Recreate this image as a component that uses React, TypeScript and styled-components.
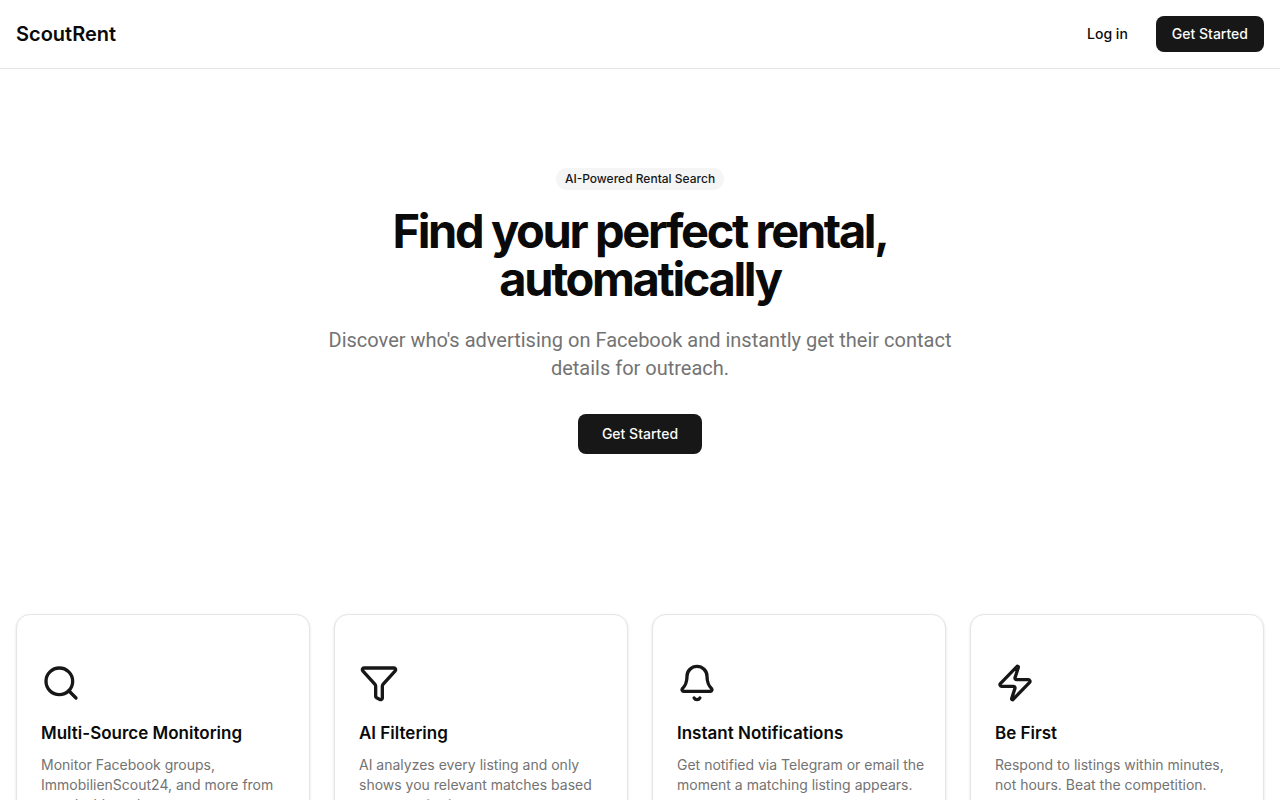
import React from "react";
import styled, { createGlobalStyle } from "styled-components";
import { Search, Funnel, Bell, Zap, type LucideIcon } from "lucide-react";

const GlobalStyle = createGlobalStyle`
  *, *::before, *::after { box-sizing: border-box; }
  body {
    margin: 0;
    background: #ffffff;
    color: #0a0a0a;
    font-family: Inter, "Liberation Sans", sans-serif;
    font-size: 16px;
    line-height: 24px;
    -webkit-font-smoothing: antialiased;
  }
  h1, h2, p { margin: 0; }
`;

const Page = styled.div`
  display: flex;
  flex-direction: column;
  min-height: 100vh;
`;

const Header = styled.header`
  display: flex;
  align-items: center;
  justify-content: space-between;
  padding: 16px;
  border-bottom: 1px solid #e5e5e5;
`;

const Brand = styled.a`
  color: inherit;
  font-size: 20px;
  line-height: 28px;
  font-weight: 600;
  text-decoration: none;
`;

const Nav = styled.nav`
  display: flex;
  align-items: center;
  gap: 12px;
`;

const Button = styled.button<{ $variant?: "solid" | "ghost"; $size?: "default" | "large" }>`
  height: ${({ $size }) => ($size === "large" ? "40px" : "36px")};
  padding: 0 ${({ $size }) => ($size === "large" ? "24px" : "16px")};
  border: 0;
  border-radius: 8px;
  background: ${({ $variant }) => ($variant === "ghost" ? "transparent" : "#171717")};
  color: ${({ $variant }) => ($variant === "ghost" ? "#0a0a0a" : "#fafafa")};
  font: inherit;
  font-size: 14px;
  line-height: 20px;
  font-weight: 500;
  white-space: nowrap;
  cursor: pointer;
`;

const Hero = styled.section`
  display: flex;
  flex-direction: column;
  align-items: center;
  padding: 99px 16px 96px;
  text-align: center;
`;

const Badge = styled.span`
  margin-bottom: 17px;
  padding: 3px 9px;
  border-radius: 11px;
  background: #f5f5f5;
  color: #171717;
  font-size: 12px;
  line-height: 16px;
  font-weight: 500;
`;

const Title = styled.h1`
  max-width: 768px;
  margin-bottom: 23px;
  font-size: 47px;
  line-height: 48px;
  font-weight: 700;
  letter-spacing: -0.05em;
`;

const Lead = styled.p`
  max-width: 672px;
  margin-bottom: 32px;
  color: #737373;
  font-family: Roboto, Inter, sans-serif;
  font-size: 20px;
  line-height: 28px;
`;

const Features = styled.section`
  display: grid;
  grid-template-columns: repeat(auto-fit, minmax(240px, 1fr));
  gap: 24px;
  padding: 64px 16px;
`;

const Card = styled.article`
  display: flex;
  flex-direction: column;
  padding: 48px 20px 48px 24px;
  border: 1px solid #e5e5e5;
  border-radius: 14px;
  background: #ffffff;
  box-shadow: 0 1px 3px rgba(0, 0, 0, 0.1), 0 1px 2px -1px rgba(0, 0, 0, 0.1);
`;

const CardTitle = styled.h2`
  margin: 16px 0 8px;
  font-size: 17px;
  line-height: 28px;
  font-weight: 600;
`;

const CardText = styled.p`
  color: #737373;
  font-size: 14px;
  line-height: 20px;
`;

const features: { icon: LucideIcon; title: string; text: string }[] = [
  { icon: Search, title: "Multi-Source Monitoring", text: "Monitor Facebook groups, ImmobilienScout24, and more from one dashboard." },
  { icon: Funnel, title: "AI Filtering", text: "AI analyzes every listing and only shows you relevant matches based on your criteria." },
  { icon: Bell, title: "Instant Notifications", text: "Get notified via Telegram or email the moment a matching listing appears." },
  { icon: Zap, title: "Be First", text: "Respond to listings within minutes, not hours. Beat the competition." },
];

export default function App() {
  return (
    <Page>
      <GlobalStyle />
      <Header>
        <Brand href="#">ScoutRent</Brand>
        <Nav>
          <Button $variant="ghost">Log in</Button>
          <Button>Get Started</Button>
        </Nav>
      </Header>
      <main>
        <Hero>
          <Badge>AI-Powered Rental Search</Badge>
          <Title>Find your perfect rental, automatically</Title>
          <Lead>
            Discover who's advertising on Facebook and instantly get their contact details for outreach.
          </Lead>
          <Button $size="large">Get Started</Button>
        </Hero>
        <Features>
          {features.map(({ icon: Icon, title, text }) => (
            <Card key={title}>
              <Icon size={40} color="#171717" aria-hidden />
              <CardTitle>{title}</CardTitle>
              <CardText>{text}</CardText>
            </Card>
          ))}
        </Features>
      </main>
    </Page>
  );
}
